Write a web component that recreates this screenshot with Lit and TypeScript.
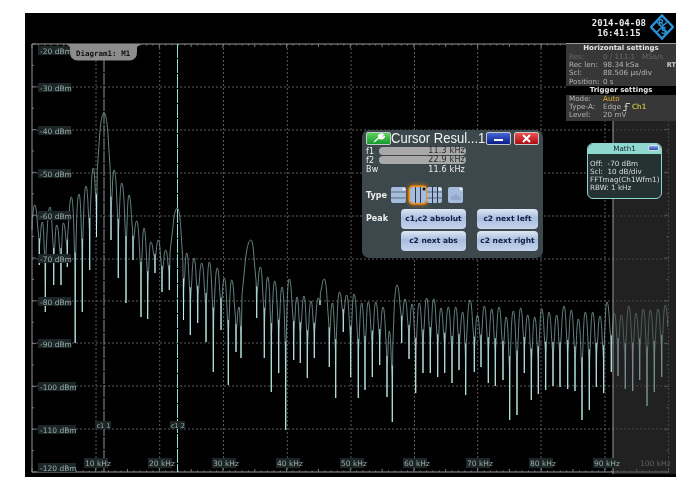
import { LitElement, html, css, svg } from 'lit';
import { customElement } from 'lit/decorators.js';

// peak / dip points of the spectrum, read off the screen, page coordinates
const TRACE: number[][] = [
  [32,230],[34.7,205],[39.3,265],[42.3,222],[45.3,312],[50,207],[53.7,285],[56.7,225],[61,285],[63.3,223],[67.3,267],
  [71.3,197],[75.2,343],[79,194],[82.3,312],[86,186],[89.7,270],[93.3,168],[96.5,237],[104,113],[111,240],[114,170],
  [118.3,278],[121.7,183],[126,303],[129,195],[133,260],[136.7,221],[141,317],[144,228],[147.7,319],[150.7,242],[155,273],
  [158.3,240],[162,292],[165.7,250],[169.3,290],[177.3,208],[183.5,320],[186.7,253],[190.3,335],[194,258],[197.7,323],
  [201.7,263],[206,342],[209.3,262],[213.3,372],[217.3,268],[221,330],[224.3,278],[228.3,385],[231.7,280],[236,352],
  [239,307],[241,358],[251,240],[256.7,318],[260.3,267],[264.3,358],[267.7,277],[271.3,392],[274.7,281],[278.7,373],
  [282,287],[285.7,430],[289.3,279],[293.7,360],[297,297],[300.3,363],[304,296],[307.3,378],[311,301],[314.3,358],
  [318.3,298],[320,305],[324.3,279],[329.3,367],[332.3,303],[335.7,398],[339.5,292],[343.3,332],[346.7,295],[350.7,377],
  [354,294],[358.3,398],[361.7,303],[365,390],[368.3,302],[372.3,377],[375.7,302],[379.7,365],[383,307],[387,397],
  [389.3,331],[392.3,422],[397,285],[401.7,343],[405,299],[409,359],[412,304],[415.7,393],[419.3,303],[423,373],
  [426.7,298],[430.3,373],[433.7,299],[437.7,377],[441,308],[444.7,373],[448.3,307],[452,383],[455.7,307],[459,370],
  [462.7,312],[465.7,395],[470,300],[474.3,372],[477.3,315],[481,367],[484.3,306],[488.3,383],[491.7,309],[495.3,386],
  [499,307],[503,380],[506.2,317],[509.7,420],[513.3,311],[517,415],[520.7,308],[524.3,373],[527.7,315],[531.3,400],
  [534.7,317],[538.3,394],[541.7,309],[545.7,390],[549,312],[553,386],[556.7,315],[560,387],[564,306],[567.7,389],
  [571.3,310],[575,391],[578.3,319],[582,420],[585.3,312],[589.3,410],[592.7,312],[596.3,387],[600,316],[603.7,393],
  [607,302],[611.3,372],[614.3,313],[618,376],[621.3,315],[625.3,389],[628.7,306],[632.7,391],[636,313],[639.7,380],
  [643.3,309],[647,406],[650.3,310],[654.3,392],[658,309],[661.7,377],[665.3,305],[667.7,327],
];

// lobes are small rounded tips on a neck that closes into a 1px spike
function tracePath() {
  let d = `M${TRACE[0][0]} ${TRACE[0][1]}`;
  for (let i = 1; i < TRACE.length; i++) {
    const [x0, y0] = TRACE[i - 1];
    const [x1, y1] = TRACE[i];
    const dx = x1 - x0;
    const h = Math.abs(y1 - y0);
    const cap = Math.min(h * 0.3, 22);
    const neck = cap + (h - cap) * 0.35;
    if (y1 < y0) {
      d += `L${x1 - dx * 0.9} ${y1 + neck}L${x1 - dx * 0.58} ${y1 + cap}`;
      d += `C${x1 - dx * 0.42} ${y1 + cap * 0.3} ${x1 - dx * 0.22} ${y1} ${x1} ${y1}`;
    } else {
      d += `C${x0 + dx * 0.22} ${y0} ${x0 + dx * 0.42} ${y0 + cap * 0.3} ${x0 + dx * 0.58} ${y0 + cap}`;
      d += `L${x0 + dx * 0.9} ${y0 + neck}L${x1} ${y1}`;
    }
  }
  return d;
}

// brighter lower part of each dip
function spikePath() {
  let d = '';
  for (let i = 1; i < TRACE.length - 1; i++) {
    const [, yp] = TRACE[i - 1];
    const [x, y] = TRACE[i];
    const [, yn] = TRACE[i + 1];
    if (y > yp && y > yn) {
      d += `M${x} ${y - (y - Math.max(yp, yn)) * 0.62}V${y}`;
    }
  }
  return d;
}

const GRID_X = [96, 159.7, 223.5, 287.3, 351, 414.5, 477.7, 541, 605, 668.5];
const GRID_Y = [87, 130, 173, 216, 259, 301, 343, 386, 429];
const DB = [
  ['-20 dBm', 46], ['-30 dBm', 83], ['-40 dBm', 126], ['-50 dBm', 169], ['-60 dBm', 211], ['-70 dBm', 254],
  ['-80 dBm', 297], ['-90 dBm', 339], ['-100 dBm', 382], ['-110 dBm', 425], ['-120 dBm', 463],
] as [string, number][];
const KHZ = [
  ['10 kHz', 84, 24], ['20 kHz', 148, 24], ['30 kHz', 212, 24], ['40 kHz', 276, 24], ['50 kHz', 340, 24],
  ['60 kHz', 403, 24], ['70 kHz', 466, 24], ['80 kHz', 529, 24], ['90 kHz', 593, 24],
] as [string, number, number][];

function ticks() {
  const out = [];
  for (let i = 0; i <= 100; i++) {
    const x = 32 + i * 6.365;
    const h = i % 10 === 0 ? 4 : i % 5 === 0 ? 3 : 1.5;
    out.push(svg`<line class="tick" x1=${x} x2=${x} y1="44" y2=${44 + h}></line>`);
    out.push(svg`<line class="tick" x1=${x} x2=${x} y1="472" y2=${472 - h}></line>`);
  }
  for (let i = 0; i <= 20; i++) {
    const y = 44 + i * 21.4;
    const w = i % 2 === 0 ? 4 : 2;
    out.push(svg`<line class="tick" x1="32" x2=${32 + w} y1=${y} y2=${y}></line>`);
    out.push(svg`<line class="tick" x1="668.5" x2=${668.5 - w} y1=${y} y2=${y}></line>`);
  }
  return out;
}

@customElement('app-root')
export class AppRoot extends LitElement {
  static styles = css`
    :host {
      display: block;
      width: 692px;
      height: 485px;
      background: #fff;
      overflow: hidden;
      font-family: "DejaVu Sans", sans-serif;
    }
    .screen {
      position: relative;
      margin: 13px 0 0 25px;
      width: 651px;
      height: 464px;
      background: #000;
      overflow: hidden;
      filter: blur(0.45px);
    }
    .plot { display: block; position: absolute; left: 0; top: 0; }
    .plot .frame { stroke: #989898; stroke-width: 1; fill: none; }
    .plot .grid { stroke: #5c5c5c; stroke-width: 1; stroke-dasharray: 2 2; }
    .plot .tick { stroke: #7a7a7a; stroke-width: 1; }
    .plot .trace { fill: none; stroke: #86aeaa; stroke-width: 0.75; }
    .plot .spike { fill: none; stroke: #c4f6f0; stroke-width: 0.9; }
    .plot .c1 { stroke: #8a9696; stroke-width: 1; stroke-dasharray: 12 1; }
    .plot .c2 { stroke: #96dcd6; stroke-width: 1; stroke-dasharray: 14 1; }
    .plot .chip { fill: #1c2626; }
    .plot text { font-family: "DejaVu Sans", sans-serif; font-size: 7.500px; fill: #98aca8; }
    .plot text.dim { fill: #5a6464; }
    .plot text.cur { font-size: 6.500px; }
    .tab {
      position: absolute;
      left: 41px;
      top: 31px;
      width: 75px;
      height: 17px;
      box-sizing: border-box;
      padding: 5px 0 0 10px;
      background: #8c8c8c;
      clip-path: path('M0 0H75L71 3V8Q71 16.500 63 16.500H12Q4 16.500 4 8V3Z');
      color: #111;
      font: bold 7.500px "DejaVu Sans Mono", monospace;
      white-space: nowrap;
    }
    .stamp {
      position: absolute;
      right: 30px;
      top: 5px;
      color: #e8e8e8;
      font: bold 9px/10px "DejaVu Sans Mono", monospace;
      text-align: center;
    }
    .logo { position: absolute; left: 625px; top: 1px; }
    .logo text { font: bold 8px "DejaVu Sans", sans-serif; fill: #2b8fd2; }
    .settings {
      position: absolute;
      left: 541px;
      top: 30px;
      width: 110px;
      height: 78px;
      box-sizing: border-box;
      background: #373737;
      border-top: 1px solid #999;
      color: #b4b4b4;
      font-size: 7.200px;
      overflow: hidden;
    }
    .settings h4 {
      margin: 0;
      height: 8.500px;
      line-height: 8.500px;
      background: #000;
      color: #e4e4e4;
      font-size: 7px;
      font-weight: bold;
      text-align: center;
    }
    .settings h4.first { background: transparent; }
    .settings .row {
      display: grid;
      grid-template-columns: 34px 1fr auto;
      height: 8.400px;
      line-height: 8.400px;
      padding-left: 3px;
      white-space: nowrap;
    }
    .settings .row.off { color: #666; }
    .settings .rt { color: #ccc; font-weight: bold; font-size: 6.500px; }
    .settings .auto { color: #d8ac30; }
    .settings .ch { color: #e4e44a; }
    .settings .val { display: flex; align-items: center; gap: 2px; height: 8.400px; }
    .math {
      position: absolute;
      left: 562px;
      top: 130px;
      width: 75px;
      height: 56px;
      box-sizing: border-box;
      border: 1px solid #8fd4cc;
      border-radius: 6px;
      background: #243232;
      overflow: hidden;
      color: #dcdcdc;
      font-size: 7.200px;
      line-height: 8px;
    }
    .math .head {
      display: flex;
      justify-content: center;
      align-items: center;
      position: relative;
      height: 10px;
      background: #8fd8d0;
      color: #123;
    }
    .math .mini {
      position: absolute;
      right: 2px;
      top: 1px;
      width: 11px;
      height: 6px;
      border-radius: 2px;
      background: linear-gradient(#88a8e8, #2848b0);
      border: 1px solid #dde;
      box-sizing: border-box;
    }
    .math .body { padding: 6px 0 0 2px; white-space: nowrap; }
    .dialog {
      position: absolute;
      left: 337px;
      top: 117px;
      width: 181px;
      height: 128px;
      box-sizing: border-box;
      padding: 1px 4px 0;
      border-radius: 7px;
      background: #3c484c;
      color: #eee;
      display: flex;
      flex-direction: column;
    }
    .titlebar { display: flex; align-items: center; height: 14px; }
    .titlebar .t {
      width: 95px;
      flex: none;
      font: 15px/14px "Liberation Sans", sans-serif;
      color: #f2f2f2;
      white-space: nowrap;
    }
    .titlebar .t span { display: inline-block; transform: scaleX(0.87); transform-origin: left center; }
    .wbtn {
      display: flex;
      flex: none;
      align-items: center;
      justify-content: center;
      width: 25px;
      height: 13px;
      box-sizing: border-box;
      border: 1px solid #c4c8c8;
      border-radius: 2px;
    }
    .wbtn.green { background: linear-gradient(#5ed45e, #149a2c); }
    .wbtn.blue { background: linear-gradient(#4468d8, #0c1c86); margin-right: 3px; }
    .wbtn.red { background: linear-gradient(#f05050, #a80c14); }
    .wbtn .bar { width: 9px; height: 2px; background: #fff; margin-top: 3px; }
    .vals {
      display: grid;
      grid-template-columns: 13px 87px;
      grid-auto-rows: 9px;
      margin-top: 2px;
      font-size: 8px;
      line-height: 9px;
      letter-spacing: 0.2px;
    }
    .vals .v { text-align: right; padding-right: 1px; color: #eee; }
    .vals .v.pill { background: #a8a8a8; color: #2a2a2a; border-radius: 4px; height: 8px; line-height: 8px; }
    .type {
      display: flex;
      align-items: center;
      margin-top: 12px;
      height: 18px;
      font-size: 8px;
      font-weight: bold;
    }
    .type .lbl { width: 25px; }
    .ic { display: block; flex: none; }
    .ic.sel {
      border-radius: 3px;
      box-shadow: 0 0 0 1.500px #f09018, 0 0 4px 2px #d07810;
    }
    .peak {
      display: grid;
      grid-template-columns: 35px 65px 65px;
      grid-auto-rows: 20px;
      row-gap: 2px;
      margin-top: 5px;
      font-size: 8px;
      font-weight: bold;
    }
    .peak .l { line-height: 20px; }
    .peak button {
      all: unset;
      box-sizing: border-box;
      width: 65px;
      height: 20px;
      text-align: center;
      border-radius: 4px;
      background: linear-gradient(#dfe7f4, #a9bede 45%, #c6d4ec);
      color: #101c44;
      font: bold 7.500px/20px "DejaVu Sans", sans-serif;
      white-space: nowrap;
    }
    .peak button.right { margin-left: 11px; width: 61px; }
    .gap4 { width: 4px; }
    .gap1 { width: 1px; }
    .gap6 { width: 6px; }
  `;

  private typeIcon(kind: string, sel = false) {
    const w = kind === 'v' ? 16 : 15;
    return html`<svg class="ic ${sel ? 'sel' : ''}" width=${w} height="16" viewBox="0 0 ${w} 16">
      <rect x="0" y="0" width=${w} height="16" rx="2" fill="#a6bcdc"></rect>
      ${kind === 'h' || kind === 'b'
        ? svg`<line x1="0" x2=${w} y1="5" y2="5" stroke="#5a6a80"></line><line x1="0" x2=${w} y1="11" y2="11" stroke="#5a6a80"></line>`
        : ''}
      ${kind === 'v' || kind === 'b'
        ? svg`<line x1="5.500" x2="5.500" y1="0" y2="16" stroke="#2a3648"></line><line x1="10.500" x2="10.500" y1="0" y2="16" stroke="#2a3648"></line>`
        : ''}
      ${kind === 'p' ? svg`<path d="M4 13V9M6 13V8M8 13V7M10 13V9M12 13V10" stroke="#8296b8"></path>` : ''}
      <circle cx=${w - 2} cy="2" r="1.500" fill=${sel ? '#111' : '#eee'}></circle>
    </svg>`;
  }

  render() {
    return html`
      <div class="screen">
        <svg class="plot" width="651" height="464" viewBox="25 13 651 464">
          <rect x="613" y="44" width="63" height="430" fill="#222"></rect>
          ${GRID_X.map((x) => svg`<line class="grid" x1=${x} x2=${x} y1="44" y2="472"></line>`)}
          ${GRID_Y.map((y) => svg`<line class="grid" x1="32" x2="669" y1=${y} y2=${y}></line>`)}
          <path class="frame" d="M32 472V44H669M32 472H669"></path>
          ${ticks()}
          <line class="c1" x1="104" x2="104" y1="60" y2="472"></line>
          <line class="c2" x1="177.500" x2="177.500" y1="44" y2="472"></line>
          <path class="trace" d=${tracePath()}></path>
          <path class="spike" d=${spikePath()}></path>
          <rect x="613" y="44" width="63" height="430" fill="#222" opacity="0.42"></rect>
          <line x1="613" x2="613" y1="120" y2="474" stroke="#9a9a9a"></line>
          ${DB.map(([t, y]) => svg`
            <rect class="chip" x="38" y=${y} width=${t.length > 7 ? 38 : 33} height="9"></rect>
            <text x="40" y=${y + 7.500}>${t}</text>`)}
          ${KHZ.map(([t, x, w]) => svg`
            <rect class="chip" x=${x} y="458" width=${w} height="10"></rect>
            <text x=${x + 1} y="466">${t}</text>`)}
          <text class="dim" x="640" y="466">100 kHz</text>
          <rect class="chip" x="95" y="421" width="16" height="8"></rect>
          <text class="cur" x="96.500" y="427.500">c1 1</text>
          <rect class="chip" x="170" y="421" width="15" height="8"></rect>
          <text class="cur" x="171" y="427.500">c1 2</text>
        </svg>

        <div class="tab">Diagram1: M1</div>

        <div class="stamp">2014-04-08<br />16:41:15</div>
        <svg class="logo" width="24" height="26" viewBox="0 0 24 26">
          <path d="M12 1.500L23 13L12 24.500L1 13Z" fill="none" stroke="#2b8fd2" stroke-width="2.500"></path>
          <path d="M6.500 7.500L17.500 18.500M17.500 7.500L6.500 18.500" stroke="#2b8fd2" stroke-width="1.500"></path>
          <text x="8" y="11.500">R</text>
          <text x="11" y="20">S</text>
        </svg>

        <div class="settings">
          <h4 class="first">Horizontal settings</h4>
          <div class="row off"><span>Res:</span><span>0 / 111.1 &nbsp; MSa/s</span></div>
          <div class="row"><span>Rec len:</span><span>98.34 kSa</span><span class="rt">RT</span></div>
          <div class="row"><span>Scl:</span><span>88.506 µs/div</span></div>
          <div class="row"><span>Position:</span><span>0 s</span></div>
          <h4>Trigger settings</h4>
          <div class="row"><span>Mode:</span><span class="auto">Auto</span></div>
          <div class="row">
            <span>Type-A:</span>
            <span class="val"><span>Edge</span><svg width="7" height="8" viewBox="0 0 7 8"><path d="M0 7.500H3V0.500H7M1.500 4L3 2.500L4.500 4" fill="none" stroke="#ccc"></path></svg><span class="ch">Ch1</span></span>
          </div>
          <div class="row"><span>Level:</span><span>20 mV</span></div>
        </div>

        <div class="math">
          <div class="head">Math1<span class="mini"></span></div>
          <div class="body">
            Off: &nbsp;-70 dBm<br />
            Scl: &nbsp;10 dB/div<br />
            FFTmag(Ch1Wfm1)<br />
            RBW: 1 kHz
          </div>
        </div>

        <div class="dialog">
          <div class="titlebar">
            <span class="wbtn green">
              <svg width="12" height="10" viewBox="0 0 12 10"><path d="M1 9L6 4.500M5.500 2.500C6.500 0.800 9 0.500 10.500 1.500L8.500 3L9.500 4.500L11.500 3.500C11 5.500 8.500 6.500 6.500 5.500Z" fill="#fff" stroke="#fff" stroke-width="1.200"></path></svg>
            </span>
            <span class="t"><span>Cursor Resul...1</span></span>
            <span class="wbtn blue"><span class="bar"></span></span>
            <span class="wbtn red">
              <svg width="9" height="9" viewBox="0 0 9 9"><path d="M1 1L8 8M8 1L1 8" stroke="#fff" stroke-width="2"></path></svg>
            </span>
          </div>
          <div class="vals">
            <span>f1</span><span class="v pill">11.3 kHz</span>
            <span>f2</span><span class="v pill">22.9 kHz</span>
            <span>Bw</span><span class="v">11.6 kHz</span>
          </div>
          <div class="type">
            <span class="lbl">Type</span>
            ${this.typeIcon('h')}
            <span class="gap4"></span>
            ${this.typeIcon('v', true)}
            <span class="gap1"></span>
            ${this.typeIcon('b')}
            <span class="gap6"></span>
            ${this.typeIcon('p')}
          </div>
          <div class="peak">
            <span class="l">Peak</span>
            <button>c1,c2 absolut</button>
            <button class="right">c2 next left</button>
            <span></span>
            <button>c2 next abs</button>
            <button class="right">c2 next right</button>
          </div>
        </div>
      </div>
    `;
  }
}
